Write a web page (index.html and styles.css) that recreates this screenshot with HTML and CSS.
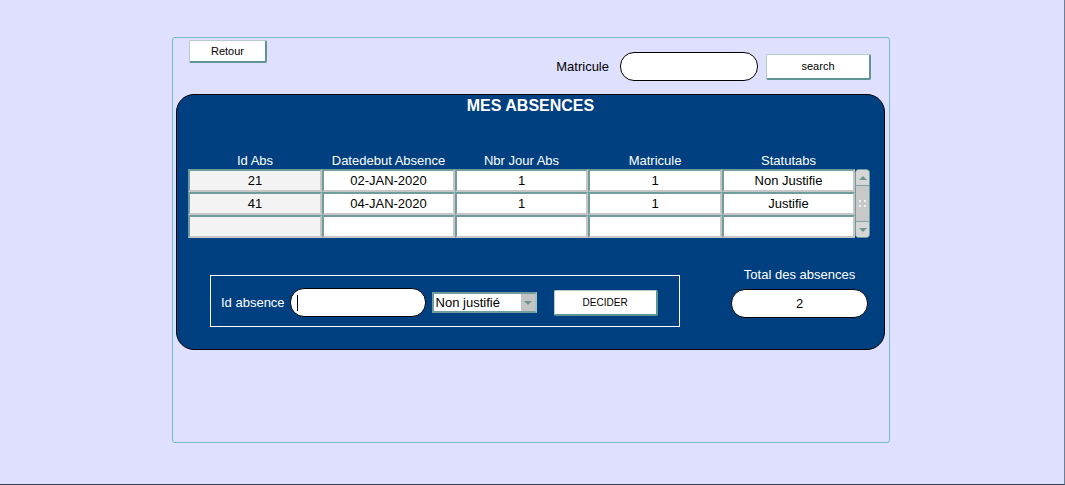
FILE: index.html
```html
<!DOCTYPE html>
<html lang="fr">
<head>
<meta charset="utf-8">
<title>Mes absences</title>
<link rel="stylesheet" href="styles.css">
</head>
<body>
<div class="screen">
  <div class="frame">
    <div class="topbar">
      <button class="btn btn-retour">Retour</button>
      <div class="search-group">
        <span class="lbl-dark">Matricule</span>
        <div class="pill pill-search"></div>
        <button class="btn btn-search">search</button>
      </div>
    </div>
    <div class="panel">
      <div class="title">MES ABSENCES</div>
      <div class="grid">
        <div class="hdr">Id Abs</div>
        <div class="hdr">Datedebut Absence</div>
        <div class="hdr">Nbr Jour Abs</div>
        <div class="hdr">Matricule</div>
        <div class="hdr">Statutabs</div>
        <div class="hdr"></div>

        <div class="cell c-id">21</div>
        <div class="cell">02-JAN-2020</div>
        <div class="cell">1</div>
        <div class="cell">1</div>
        <div class="cell">Non Justifie</div>

        <div class="cell c-id">41</div>
        <div class="cell">04-JAN-2020</div>
        <div class="cell">1</div>
        <div class="cell">1</div>
        <div class="cell">Justifie</div>

        <div class="cell c-id"></div>
        <div class="cell"></div>
        <div class="cell"></div>
        <div class="cell"></div>
        <div class="cell"></div>

        <div class="scroll">
          <div class="sb-btn sb-up"><span class="tri-up"></span></div>
          <div class="sb-track">
            <div class="grip"><span></span><span></span><span></span><span></span></div>
          </div>
          <div class="sb-btn sb-down"><span class="tri-down"></span></div>
        </div>
      </div>
      <div class="bottom">
        <div class="decide-box">
          <span class="lbl-white">Id absence</span>
          <div class="pill pill-id"><span class="caret"></span></div>
          <div class="select">
            <span class="select-text">Non justifié</span>
            <span class="select-arrow"><span class="tri-down"></span></span>
          </div>
          <button class="btn btn-decider">DECIDER</button>
        </div>
        <div class="total">
          <span class="lbl-white total-lbl">Total des absences</span>
          <div class="pill pill-total">2</div>
        </div>
      </div>
    </div>
  </div>
</div>
</body>
</html>
```

FILE: styles.css
```css
body {
  margin: 0;
  font-family: "Liberation Sans", Arial, sans-serif;
}

.screen {
  width: 1065px;
  height: 485px;
  box-sizing: border-box;
  background: #dfdffe;
  border-right: 1px solid #6a8194;
  border-bottom: 1px solid #2c3e50;
  overflow: hidden;
  padding: 37px 0 0 172px;
}

.frame {
  width: 718px;
  height: 406px;
  box-sizing: border-box;
  border: 1px solid #72bcc4;
  border-radius: 3px;
}

.topbar {
  height: 56px;
  box-sizing: border-box;
  display: flex;
  justify-content: space-between;
  align-items: flex-start;
  padding: 2px 18px 0 16px;
}

.btn {
  appearance: none;
  margin: 0;
  padding: 0;
  background: #fff;
  color: #000;
  font-family: "Liberation Sans", Arial, sans-serif;
  font-size: 11px;
  box-sizing: border-box;
  border-style: solid;
  border-width: 1px 2px 2px 1px;
  border-color: #b4cccc #5f9494 #5f9494 #b4cccc;
  border-radius: 2px;
  cursor: default;
}

.btn-retour {
  width: 78px;
  height: 23px;
}

.search-group {
  display: flex;
  align-items: center;
  margin-top: 12px;
}

.lbl-dark {
  font-size: 13px;
  color: #000;
  margin-right: 11px;
}

.pill {
  box-sizing: border-box;
  background: #fff;
  border: 1px solid #000;
  border-radius: 14px;
}

.pill-search {
  width: 138px;
  height: 29px;
}

.btn-search {
  margin-left: 8px;
  width: 105px;
  height: 26px;
}

.panel {
  margin-left: 3px;
  width: 709px;
  height: 256px;
  box-sizing: border-box;
  background: #004080;
  border: 1px solid #000;
  border-radius: 18px;
}

.title {
  height: 22px;
  line-height: 22px;
  text-align: center;
  color: #fff;
  font-weight: bold;
  font-size: 16px;
}

.grid {
  display: grid;
  grid-template-columns: 134px 133px 133px 134px 133px 15px;
  grid-template-rows: 16px 23px 23px 23px;
  margin: 36px 0 0 11px;
}

.hdr {
  color: #fff;
  font-size: 13px;
  line-height: 16px;
  text-align: center;
}

.cell {
  box-sizing: border-box;
  background: #fff;
  border: 2px solid;
  border-color: #6f9d9d #c6c6c6 #c6c6c6 #6f9d9d;
  font-size: 13px;
  line-height: 19px;
  text-align: center;
  color: #000;
}

.c-id {
  background: #f3f3f3;
}

.scroll {
  grid-column: 6;
  grid-row: 2 / 5;
  box-sizing: border-box;
  background: #c8c8c8;
  border: 1px solid #6f9d9d;
  border-radius: 4px;
  display: flex;
  flex-direction: column;
  overflow: hidden;
}

.sb-btn {
  height: 15px;
  background: #d6d6d6;
  display: flex;
  align-items: center;
  justify-content: center;
}

.sb-up {
  border-bottom: 1px solid #7fa3a3;
}

.sb-down {
  border-top: 1px solid #7fa3a3;
}

.sb-track {
  flex: 1;
  display: flex;
  align-items: center;
  justify-content: center;
}

.grip {
  display: grid;
  grid-template-columns: 2px 2px;
  grid-template-rows: 2px 2px;
  gap: 3px;
}

.grip span {
  background: #eef2f2;
}

.tri-up {
  width: 0;
  height: 0;
  border-left: 4px solid transparent;
  border-right: 4px solid transparent;
  border-bottom: 4px solid #6f9696;
}

.tri-down {
  width: 0;
  height: 0;
  border-left: 4px solid transparent;
  border-right: 4px solid transparent;
  border-top: 4px solid #6f9696;
}

.bottom {
  display: flex;
  align-items: flex-start;
  margin: 29px 0 0 11px;
}

.decide-box {
  margin: 8px 0 0 22px;
  width: 470px;
  height: 52px;
  box-sizing: border-box;
  border: 1px solid #fff;
  display: flex;
  align-items: center;
  padding: 3px 0 0 10px;
}

.lbl-white {
  color: #fff;
  font-size: 13px;
}

.pill-id {
  margin-left: 5px;
  width: 136px;
  height: 29px;
  display: flex;
  align-items: center;
}

.caret {
  width: 1px;
  height: 16px;
  background: #000;
  margin-left: 6px;
}

.select {
  margin-left: 6px;
  width: 105px;
  height: 21px;
  box-sizing: border-box;
  display: flex;
  background: #fff;
  border: 2px solid;
  border-color: #6f9d9d #a9c2c2 #6f9d9d #6f9d9d;
}

.select-text {
  flex: 1;
  font-size: 13px;
  line-height: 17px;
  padding-left: 2px;
  color: #000;
}

.select-arrow {
  width: 14px;
  background: #c4c4c4;
  display: flex;
  align-items: center;
  justify-content: center;
}

.btn-decider {
  margin-left: 17px;
  width: 104px;
  height: 26px;
  font-size: 10px;
}

.total {
  margin-left: 51px;
  width: 137px;
  display: flex;
  flex-direction: column;
  align-items: center;
}

.total-lbl {
  line-height: 16px;
}

.pill-total {
  margin-top: 6px;
  width: 137px;
  height: 29px;
  text-align: center;
  font-size: 13px;
  line-height: 27px;
  color: #000;
}
```
